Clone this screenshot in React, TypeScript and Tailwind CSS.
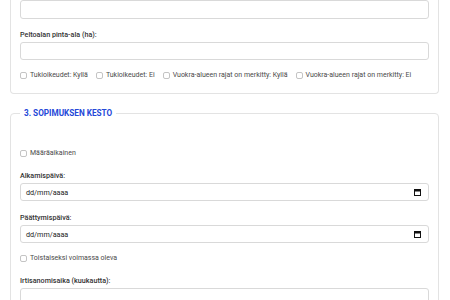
import React from 'react';

const font = { fontFamily: 'Roboto, "Liberation Sans", Arial, sans-serif' };

const TextInput = ({ first }: { first?: boolean }) => (
  <input
    type="text"
    className={
      first
        ? 'block h-[19px] w-full rounded-[3px] border border-[#d9d9d9] bg-white px-[5px] text-[7px] outline-none'
        : 'block h-[18px] w-full rounded-[3px] border border-[#d9d9d9] bg-white px-[5px] text-[7px] outline-none'
    }
  />
);

const DateInput = () => (
  <div className="flex h-[18px] w-full items-center justify-between rounded-[3px] border border-[#d9d9d9] bg-white pl-[5px] pr-[7px]">
    <span className="text-[7.2px] leading-[9px] text-[#222]">dd/mm/aaaa</span>
    <svg width="7" height="7" viewBox="0 0 7 7" className="block">
      <rect x="0.5" y="0.5" width="6" height="6" fill="none" stroke="#111" strokeWidth="1" />
      <rect x="0.5" y="0.5" width="6" height="2" fill="#111" />
    </svg>
  </div>
);

const Check = ({ label }: { label: string }) => (
  <label className="flex items-center gap-[3px] text-[7px] leading-[9px] text-[#4a4a4a]">
    <input
      type="checkbox"
      className="h-[7px] w-[7px] appearance-none rounded-[2px] border border-[#c4c4c4] bg-white"
    />
    <span>{label}</span>
  </label>
);

const Label = ({ children }: { children: React.ReactNode }) => (
  <label className="mb-[3px] block text-[7.2px] font-medium leading-[9px] text-[#333]">{children}</label>
);

export default function App() {
  return (
    <div className="h-[300px] w-[450px] overflow-hidden bg-white pl-[10px] pr-[11px]" style={font}>
      {/* section 2, scrolled so its top is out of view */}
      <fieldset className="rounded-b-[4px] border border-t-0 border-[#e3e3e3] px-[9px] pb-[13px]">
        <TextInput first />
        <div className="mt-[11px]">
          <Label>Peltoalan pinta-ala (ha):</Label>
          <TextInput />
        </div>
        <div className="mt-[11px] flex items-center gap-[8px]">
          <Check label="Tukioikeudet: Kyllä" />
          <Check label="Tukioikeudet: Ei" />
          <Check label="Vuokra-alueen rajat on merkitty: Kyllä" />
          <Check label="Vuokra-alueen rajat on merkitty: Ei" />
        </div>
      </fieldset>

      <fieldset className="mt-[15px] rounded-[4px] border border-[#e3e3e3] px-[9px] pt-[31px]">
        <legend className="px-[4px] text-[8.2px] font-bold uppercase leading-[9px] text-[#2548d8]">
          3. Sopimuksen kesto
        </legend>
        <Check label="Määräaikainen" />
        <div className="mt-[13px]">
          <Label>Alkamispäivä:</Label>
          <DateInput />
        </div>
        <div className="mt-[12px]">
          <Label>Päättymispäivä:</Label>
          <DateInput />
        </div>
        <div className="mt-[11px]">
          <Check label="Toistaiseksi voimassa oleva" />
        </div>
        <div className="mt-[13px]">
          <Label>Irtisanomisaika (kuukautta):</Label>
          <TextInput />
        </div>
      </fieldset>
    </div>
  );
}
